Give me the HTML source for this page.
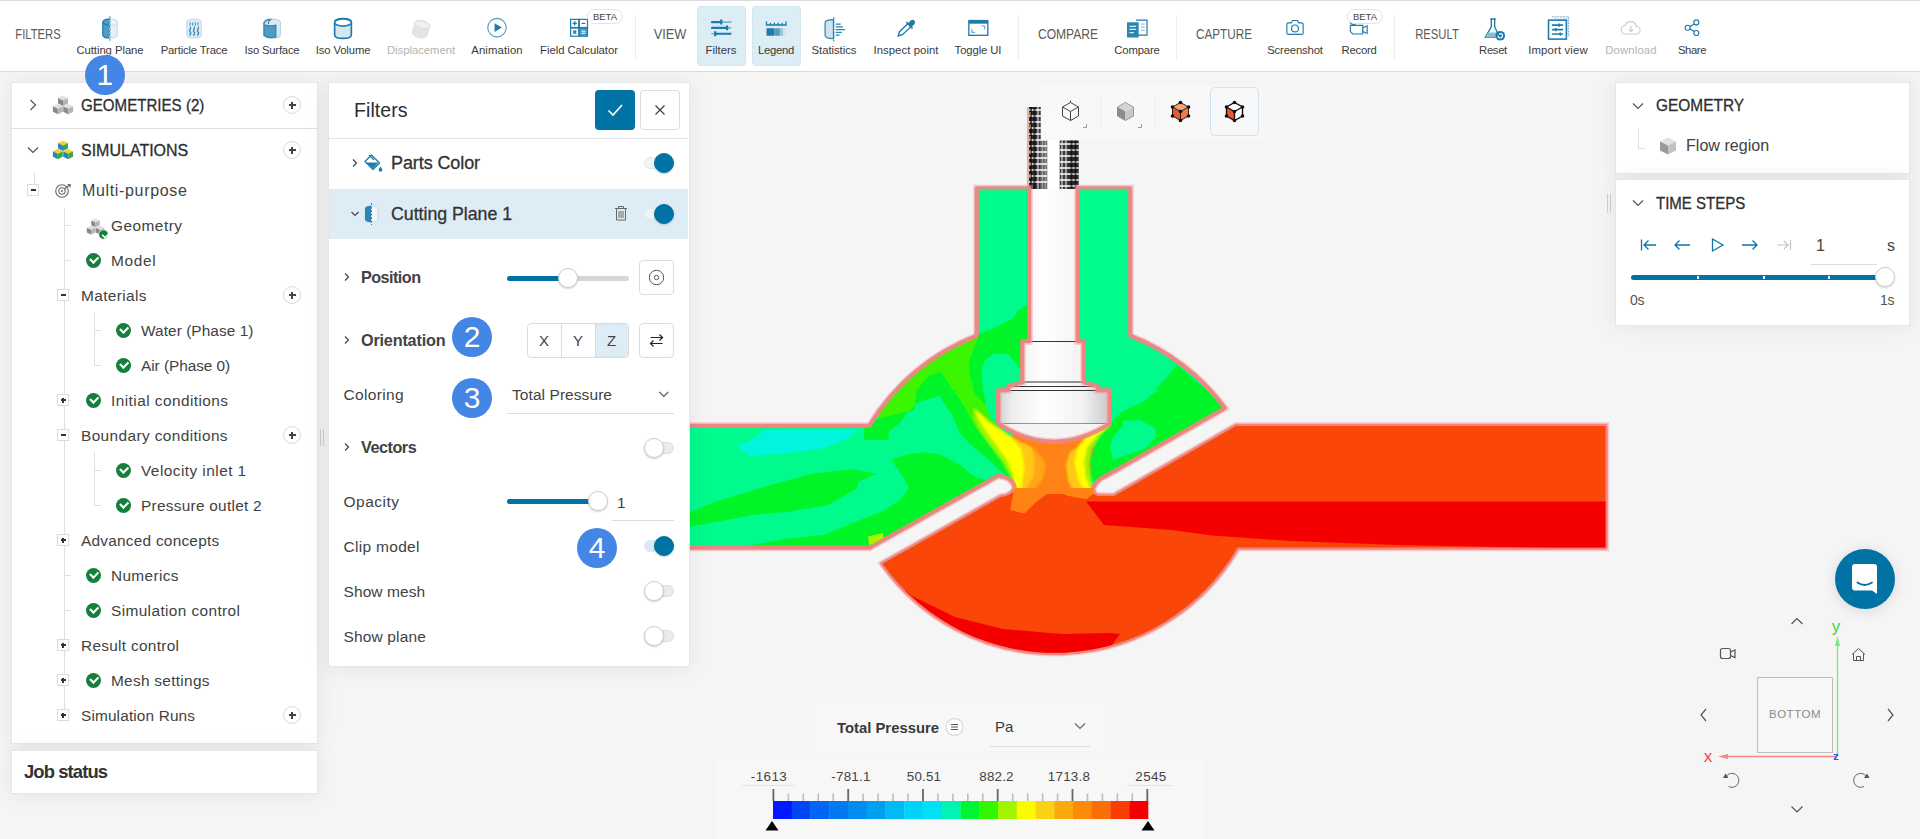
<!DOCTYPE html>
<html lang="en">
<head>
<meta charset="utf-8">
<title>Post-processor</title>
<style>
*{box-sizing:border-box;margin:0;padding:0}
html,body{width:1920px;height:839px;overflow:hidden;background:#f5f5f5;font-family:"Liberation Sans",sans-serif;color:#3a3a3a}
.abs{position:absolute}
#top{z-index:4;position:absolute;left:0;top:0;width:1920px;height:72px;background:#fff;border-top:1px solid #dcdcdc;border-bottom:1px solid #dadada}
.sec{position:absolute;top:25px;line-height:17px;color:#5a5a5a;transform:translateX(-50%);white-space:nowrap;font-weight:400}
.ti{position:absolute;top:42px;font-size:11px;color:#3a3a3a;transform:translateX(-50%);white-space:nowrap;line-height:14px}
.ti.dis{color:#b4b4b4}
.ic{position:absolute;top:12.5px;width:29px;height:29px;transform:translateX(-50%)}
.vsep{position:absolute;top:14px;width:1px;height:44px;background:#ececec}
.hl{position:absolute;top:5px;height:60px;width:49px;background:#dcedf6;border:1px dashed #cfe4ef;border-radius:4px}
.beta{position:absolute;top:8px;height:15px;line-height:14px;font-size:9.5px;color:#444;background:#fff;border:1px solid #e4e4e4;border-radius:8px;padding:0 5px;transform:translateX(-50%)}
.panel{z-index:3;position:absolute;background:#fff;border:1px solid #e6e6e6;box-shadow:0 1px 22px rgba(0,0,0,.075)}
.row{position:absolute;left:0;white-space:nowrap;font-size:16px;color:#424242;transform:translateY(-50%);line-height:20px}
.hd{color:#2e2e2e;-webkit-text-stroke:.3px #2e2e2e}
.plus{position:absolute;width:18px;height:18px;border:1px solid #d9d9d9;border-radius:50%;background:#fff}
.plus:before{content:"";position:absolute;left:4.5px;top:7.3px;width:7px;height:1.4px;background:#444}
.plus:after{content:"";position:absolute;left:7.3px;top:4.5px;width:1.4px;height:7px;background:#444}
.exp{position:absolute;width:12px;height:12px;border:1px solid #dcdcdc;background:#fff}
.exp:before{content:"";position:absolute;left:2.5px;top:4.2px;width:5px;height:1.6px;background:#333}
.exp.p:after{content:"";position:absolute;left:4.2px;top:2.5px;width:1.6px;height:5px;background:#333}
.chk{position:absolute;width:15px;height:15px;border-radius:50%;background:#14803c}
.chk:after{content:"";position:absolute;left:4px;top:3.4px;width:6px;height:3.6px;border-left:2px solid #fff;border-bottom:2px solid #fff;transform:rotate(-45deg)}
.tl{position:absolute;background:#e0e0e0}
.badge{position:absolute;width:40px;height:40px;border-radius:50%;background:#4486e6;color:#fff;font-size:30px;line-height:40px;text-align:center;font-family:"Liberation Sans",sans-serif}
.tog{position:absolute;width:30px;height:12px;border-radius:6px;background:#ececec;border:1px solid #dcdcdc}
.tog i{position:absolute;left:-1px;top:-5px;width:20px;height:20px;border-radius:50%;background:#fff;border:1px solid #cfcfcf;box-shadow:0 1px 2px rgba(0,0,0,.2)}
.tog.on{background:#f1f4f6;border-color:#e3e8eb}
.tog.on i{left:auto;right:-1px;background:#0072a3;border-color:#0072a3}
.btn{position:absolute;border:1px solid #dcdcdc;border-radius:4px;background:#fff}
</style>
</head>
<body>
<div id="top">
<div class="sec" style="left:38.2px;font-size:14px;transform:translateX(-50%) scaleX(0.802)">FILTERS</div>
<svg class="ic" style="left:110px" viewBox="0 0 26 26"><path d="M6.500 7.500c0-1.800 2.800-3 6.500-3s6.500 1.200 6.500 3v11c0 1.800-2.800 3-6.500 3s-6.500-1.200-6.500-3z" fill="#e4eff6" stroke="#c6dcea" stroke-width="1"/><ellipse cx="13" cy="7.500" rx="6.500" ry="2.800" fill="#eef5f9" stroke="#c6dcea" stroke-width=".8"/><path d="M6.500 7.500c0-1.800 2.800-3 6-3v17c-3.200 0-6-1.200-6-3z" fill="#4f9cc3" stroke="#1d7cab" stroke-width="1"/><path d="M7 7.600c.6 1.500 2.800 2.300 5.500 2.400" fill="none" stroke="#1d7cab" stroke-width="1"/><path d="M13 2v22" stroke="#8cc0dc" stroke-width="1.800" stroke-dasharray="2.200 1.200"/></svg>
<div class="ti" style="left:110px;font-size:11.3px;font-weight:normal;letter-spacing:-0.050px">Cutting Plane</div>
<svg class="ic" style="left:194px" viewBox="0 0 26 26"><path d="M6.500 7.500c0-1.800 2.800-3 6.500-3s6.500 1.200 6.500 3v11c0 1.800-2.800 3-6.500 3s-6.500-1.200-6.500-3z" fill="#dfecf4" stroke="#c6dcea" stroke-width="1"/><path d="M9.500 7.500v3M11.800 7.500v3M14.200 7.500v3M16.500 7.500v3" stroke="#4f9cc3" stroke-width="1"/><path d="M9.500 11.500c2 1.500-2 3 0 4.500s-1 2.500 0 3.500M13 11.500c2 1.500-2 3 0 4.500s-1 2.500 0 3.500M16.500 11.500c2 1.500-2 3 0 4.500s-1 2.500 0 3.500" fill="none" stroke="#3a8fbb" stroke-width="1.300"/></svg>
<div class="ti" style="left:194px;font-size:11.3px;font-weight:normal;letter-spacing:-0.168px">Particle Trace</div>
<svg class="ic" style="left:272px" viewBox="0 0 26 26"><path d="M5.500 7.500c0-1.800 3.200-3 7.500-3s7.500 1.200 7.500 3v11c0 1.800-3.200 3-7.500 3s-7.500-1.200-7.500-3z" fill="#dbeaf3" stroke="#b5d3e3" stroke-width="1"/><path d="M5.800 9c2 1.600 7 2.200 10.700 1v10.500c-4 1.300-9 .5-10.700-1.500z" fill="#4f9cc3" stroke="#2b86b3" stroke-width="1"/><path d="M5.800 9.500c-.5-3 3-4.800 6.500-4.600c-2 .6-2.800 2-2.300 4" fill="#cfe3ee" stroke="#2b86b3" stroke-width="1.100"/></svg>
<div class="ti" style="left:272px;font-size:11.3px;font-weight:normal;letter-spacing:-0.210px">Iso Surface</div>
<svg class="ic" style="left:343px" viewBox="0 0 26 26"><path d="M5.500 7.500c0-2 3.300-3.300 7.500-3.300s7.500 1.300 7.500 3.300v11c0 2-3.300 3.300-7.500 3.300s-7.500-1.300-7.500-3.300z" fill="#d4e7f1" stroke="#1d7cab" stroke-width="1.500"/><ellipse cx="13" cy="7.600" rx="7.500" ry="3.200" fill="#fff" stroke="#1d7cab" stroke-width="1.500"/></svg>
<div class="ti" style="left:343px;font-size:11.3px;font-weight:normal;letter-spacing:-0.125px">Iso Volume</div>
<svg class="ic" style="left:421px" viewBox="0 0 26 26"><path d="M7 9c1-3 5-4.500 9-3s6 4 5 6l-2 7c-1 2.500-5 3.500-8.500 2.500S4 17.500 5 15z" fill="#e4e4e4"/><ellipse cx="14" cy="9.500" rx="7" ry="3.300" transform="rotate(14 14 9.500)" fill="#f0f0f0" stroke="#dadada" stroke-width=".8"/></svg>
<div class="ti dis" style="left:421px;font-size:11.3px;font-weight:normal;letter-spacing:-0.036px">Displacement</div>
<svg class="ic" style="left:497px" viewBox="0 0 26 26"><circle cx="13" cy="12.200" r="8.300" fill="#fff" stroke="#4f9cc3" stroke-width="1"/><path d="M10.800 8.200l6.500 4-6.500 4z" fill="#1d7cab"/></svg>
<div class="ti" style="left:497px;font-size:11.3px;font-weight:normal;letter-spacing:0.144px">Animation</div>
<svg class="ic" style="left:579px" viewBox="0 0 26 26"><rect x="5.500" y="4.800" width="7.300" height="7.300" fill="#fff" stroke="#1d7cab" stroke-width="1.100"/><rect x="13.300" y="4.800" width="7.300" height="7.300" fill="#fff" stroke="#1d7cab" stroke-width="1.100"/><rect x="5.500" y="12.600" width="7.300" height="7.300" fill="#fff" stroke="#1d7cab" stroke-width="1.100"/><rect x="13.300" y="12.600" width="7.300" height="7.300" fill="#4f9cc3" stroke="#1d7cab" stroke-width="1.100"/><path d="M7.200 8.450h3.900M9.150 6.500v3.900M15.300 8.450h3.300M7.700 14.800l2.900 2.900M10.600 14.800l-2.900 2.900" stroke="#1d7cab" stroke-width="1.200" fill="none"/><path d="M15.300 15.500h3.300M15.300 17.300h3.300" stroke="#fff" stroke-width="1"/></svg>
<div class="ti" style="left:579px;font-size:11.3px;font-weight:normal;letter-spacing:-0.041px">Field Calculator</div>
<div class="beta" style="left:605px">BETA</div>
<div class="vsep" style="left:635px"></div>
<div class="sec" style="left:670px;font-size:14px;transform:translateX(-50%) scaleX(0.913)">VIEW</div>
<div class="hl" style="left:697px"></div>
<svg class="ic" style="left:721px" viewBox="0 0 26 26"><path d="M4.200 7.200h18M4.200 12.400h18M4.200 17.700h18" stroke="#4f9cc3" stroke-width="1.100"/><path d="M13.200 5v4.400M18.400 10.200v4.400M7.800 15.500v4.400" stroke="#1d7cab" stroke-width="2"/><path d="M4.200 7.200h9M4.200 12.400h14.200M7.800 17.700h14.400" stroke="#1d7cab" stroke-width="2"/></svg>
<div class="ti" style="left:721px;font-size:11.3px;font-weight:normal;letter-spacing:0.026px">Filters</div>
<div class="hl" style="left:752px"></div>
<svg class="ic" style="left:776px" viewBox="0 0 26 26"><path d="M4.500 6.700v3.200h17.500V6.700M8 7.800v2M11.500 7.800v2M15 7.800v2M18.500 7.800v2" fill="none" stroke="#1d7cab" stroke-width="1.200"/><rect x="4.500" y="12.800" width="7" height="6.700" fill="#1d7cab"/><rect x="11.500" y="12.800" width="5" height="6.700" fill="#4f9cc3"/><rect x="16.500" y="12.800" width="3" height="6.700" fill="#9cc5da"/><rect x="19.500" y="12.800" width="2.500" height="6.700" fill="#d3e5ef"/></svg>
<div class="ti" style="left:776px;font-size:11.3px;font-weight:normal;letter-spacing:-0.280px">Legend</div>
<svg class="ic" style="left:834px" viewBox="0 0 26 26"><path d="M5 8c0-1.800 3.500-3 7.500-3v17c-4 0-7.500-1.200-7.500-3z" fill="#cfe3ee" stroke="#2b86b3" stroke-width="1.100"/><path d="M12.800 3v21.500" stroke="#2b86b3" stroke-width="1.100" stroke-dasharray="2 1.300"/><path d="M14.500 9h4.500M14.500 11.500h6.500M14.500 14h8.500M14.500 16.500h5.500M14.500 19h3.500" stroke="#2b86b3" stroke-width="1.100"/></svg>
<div class="ti" style="left:834px;font-size:11.3px;font-weight:normal;letter-spacing:-0.028px">Statistics</div>
<svg class="ic" style="left:906px" viewBox="0 0 26 26"><path d="M14.800 8.500l2.800 2.800-7.800 7.200-3.800 1.200 1.200-3.800z" fill="#fff" stroke="#1d7cab" stroke-width="1.200"/><path d="M13.300 7.200l5.600 5.600M15.500 9l2.300-2.600c1.300-1.400 3.500.8 2.200 2.200L17.500 11z" fill="#1d7cab" stroke="#1d7cab" stroke-width="1.600" stroke-linejoin="round"/></svg>
<div class="ti" style="left:906px;font-size:11.3px;font-weight:normal;letter-spacing:0.084px">Inspect point</div>
<svg class="ic" style="left:978px" viewBox="0 0 26 26"><rect x="4.800" y="5.900" width="17" height="13.200" fill="#fff" stroke="#1d7cab" stroke-width="1.200"/><rect x="4.800" y="5.900" width="17" height="2.800" fill="#1d7cab"/><path d="M7.500 13.500v3h3M16 10.800h3v3" fill="none" stroke="#6aa9c9" stroke-width="1"/></svg>
<div class="ti" style="left:978px;font-size:11.3px;font-weight:normal;letter-spacing:-0.108px">Toggle UI</div>
<div class="vsep" style="left:1018px"></div>
<div class="sec" style="left:1067.8px;font-size:14px;transform:translateX(-50%) scaleX(0.862)">COMPARE</div>
<svg class="ic" style="left:1137px" viewBox="0 0 26 26"><path d="M12 5.500h10v13.500H14" fill="#fff" stroke="#1d7cab" stroke-width="1.100"/><path d="M4 7.500h10.500v13.500H4z" fill="#2b86b3"/><path d="M6.200 11h6M6.200 13.800h6M6.200 16.600h4" stroke="#dcebf3" stroke-width="1.100"/><path d="M16.500 9h3.500M16.500 11.800h3.500M16.500 14.600h3.500" stroke="#9cc5da" stroke-width="1.100"/></svg>
<div class="ti" style="left:1137px;font-size:11.3px;font-weight:normal;letter-spacing:-0.170px">Compare</div>
<div class="vsep" style="left:1176px"></div>
<div class="sec" style="left:1223.9px;font-size:14px;transform:translateX(-50%) scaleX(0.837)">CAPTURE</div>
<svg class="ic" style="left:1295px" viewBox="0 0 26 26"><g transform="translate(13 12.300) scale(.86) translate(-13 -13)"><path d="M4.500 9.500a1.500 1.500 0 0 1 1.500-1.500h3l1.500-2.500h5L17 8h3a1.500 1.500 0 0 1 1.500 1.500v9a1.500 1.500 0 0 1-1.500 1.500H6a1.500 1.500 0 0 1-1.500-1.500z" fill="#fff" stroke="#1d7cab" stroke-width="1.200"/><circle cx="13" cy="13.800" r="3.600" fill="none" stroke="#1d7cab" stroke-width="1.200"/></g></svg>
<div class="ti" style="left:1295px;font-size:11.3px;font-weight:normal;letter-spacing:-0.156px">Screenshot</div>
<svg class="ic" style="left:1359px" viewBox="0 0 26 26"><g transform="translate(13 12.300) scale(.86) translate(-13 -13)"><path d="M4 10.500h13v9H6.500L4 17z" fill="#fff" stroke="#1d7cab" stroke-width="1.200"/><path d="M17 13l4.500-2v8L17 17z" fill="#fff" stroke="#1d7cab" stroke-width="1.200"/><path d="M3.500 7.500c1.500 2 4 2.500 6 2.500" fill="none" stroke="#1d7cab" stroke-width="1.200"/></g></svg>
<div class="ti" style="left:1359px;font-size:11.3px;font-weight:normal;letter-spacing:-0.259px">Record</div>
<div class="beta" style="left:1365px">BETA</div>
<div class="vsep" style="left:1394px"></div>
<div class="sec" style="left:1436.5px;font-size:14px;transform:translateX(-50%) scaleX(0.806)">RESULT</div>
<svg class="ic" style="left:1493px" viewBox="0 0 26 26"><path d="M10.500 4.500h5M11.500 4.500v7L6 21h13l-4.500-9.500v-7" fill="#fff" stroke="#1d7cab" stroke-width="1.200" stroke-linejoin="round"/><path d="M8.500 16.500h9L20 21H6z" fill="#8dbdd5"/><circle cx="19.500" cy="19.500" r="4.300" fill="#1d7cab"/><path d="M17.500 19.500a2 2 0 1 0 2-2l-1 1" fill="none" stroke="#fff" stroke-width="1"/></svg>
<div class="ti" style="left:1493px;font-size:11.3px;font-weight:normal;letter-spacing:-0.350px">Reset</div>
<svg class="ic" style="left:1558px" viewBox="0 0 26 26"><path d="M7.500 2.500h15v18" fill="#e3eff6" stroke="#7fb4cf" stroke-width="1" stroke-dasharray="1.500 1"/><rect x="4.500" y="5.500" width="16" height="17" fill="#fff" stroke="#1d7cab" stroke-width="1.400"/><path d="M7.500 10h10M7.500 14h10M7.500 18h10M14 8.500v3M11 12.500v3M15 16.500v3" stroke="#1d7cab" stroke-width="1.400"/></svg>
<div class="ti" style="left:1558px;font-size:11.3px;font-weight:normal;letter-spacing:0.175px">Import view</div>
<svg class="ic" style="left:1631px" viewBox="0 0 26 26"><g transform="translate(13 12.300) scale(.86) translate(-13 -13)"><path d="M7.500 19.500a4.500 4.500 0 0 1-.5-9 6 6 0 0 1 11.500 1 4 4 0 0 1 0 8z" fill="#fff" stroke="#cdcdcd" stroke-width="1.200"/><path d="M13 11v6M10.800 14.800L13 17l2.200-2.200" fill="none" stroke="#cdcdcd" stroke-width="1.200"/></g></svg>
<div class="ti dis" style="left:1631px;font-size:11.3px;font-weight:normal;letter-spacing:0.149px">Download</div>
<svg class="ic" style="left:1692px" viewBox="0 0 26 26"><g transform="translate(13 12.300) scale(.86) translate(-13 -13)"><path d="M9 13l8-5M9 13l8 5" stroke="#1d7cab" stroke-width="1.200"/><circle cx="17.500" cy="7.500" r="2.600" fill="#fff" stroke="#1d7cab" stroke-width="1.200"/><circle cx="8.500" cy="13" r="2.600" fill="#fff" stroke="#1d7cab" stroke-width="1.200"/><circle cx="17.500" cy="18.500" r="2.600" fill="#fff" stroke="#1d7cab" stroke-width="1.200"/></g></svg>
<div class="ti" style="left:1692px;font-size:11.3px;font-weight:normal;letter-spacing:-0.427px">Share</div>
</div>
<div class="badge" style="left:84.800px;top:55.400px;z-index:9">1</div>
<div class="panel" style="left:11px;top:82px;width:307px;height:662px">
<div class="tl" style="left:-1px;top:45px;width:307px;height:1px"></div>
<div class="tl" style="left:22px;top:89px;width:1px;height:12px"></div>
<div class="tl" style="left:52px;top:125px;width:1px;height:507px"></div>
<div class="tl" style="left:82px;top:229px;width:1px;height:54px"></div>
<div class="tl" style="left:82px;top:369px;width:1px;height:54px"></div>
<div class="tl" style="left:52px;top:142px;width:7px;height:1px"></div>
<div class="tl" style="left:52px;top:177px;width:7px;height:1px"></div>
<div class="tl" style="left:52px;top:317px;width:7px;height:1px"></div>
<div class="tl" style="left:52px;top:492px;width:7px;height:1px"></div>
<div class="tl" style="left:52px;top:527px;width:7px;height:1px"></div>
<div class="tl" style="left:52px;top:597px;width:7px;height:1px"></div>
<div class="tl" style="left:82px;top:247px;width:7px;height:1px"></div>
<div class="tl" style="left:82px;top:282px;width:7px;height:1px"></div>
<div class="tl" style="left:82px;top:387px;width:7px;height:1px"></div>
<div class="tl" style="left:82px;top:422px;width:7px;height:1px"></div>
<svg class="abs" style="left:15px;top:15px" width="12" height="14" viewBox="0 0 12 14"><path d="M3.500 2l5 5-5 5" fill="none" stroke="#555" stroke-width="1.200"/></svg>
<svg class="abs" style="left:14px;top:61px" width="14" height="12" viewBox="0 0 14 12"><path d="M2 3.500l5 5 5-5" fill="none" stroke="#555" stroke-width="1.200"/></svg>
<svg class="abs" style="left:40.0px;top:11.0px" width="22" height="22" viewBox="0 0 20 20"><g transform="translate(0 0.5)"><path d="M10 1l4.500 2.200-4.500 2.200-4.500-2.200z" fill="#e0e0e0"/><path d="M5.500 3.200l4.500 2.200v5l-4.500-2.200z" fill="#8a8a8a"/><path d="M14.500 3.200l-4.500 2.200v5l4.500-2.200z" fill="#b4b4b4"/></g><g transform="translate(-4.7 8)"><path d="M10 1l4.500 2.200-4.500 2.200-4.500-2.200z" fill="#e0e0e0"/><path d="M5.500 3.200l4.500 2.200v5l-4.500-2.200z" fill="#8a8a8a"/><path d="M14.500 3.200l-4.500 2.200v5l4.500-2.200z" fill="#b4b4b4"/></g><g transform="translate(4.7 8)"><path d="M10 1l4.500 2.200-4.500 2.200-4.500-2.200z" fill="#e0e0e0"/><path d="M5.500 3.200l4.500 2.200v5l-4.500-2.200z" fill="#8a8a8a"/><path d="M14.500 3.200l-4.500 2.200v5l4.500-2.200z" fill="#b4b4b4"/></g></svg>
<svg class="abs" style="left:40.0px;top:56.0px" width="22" height="22" viewBox="0 0 20 20"><g transform="translate(0 0.5)"><path d="M10 1l4.500 2.200-4.500 2.200-4.500-2.200z" fill="#f3d12b"/><path d="M5.500 3.200l4.500 2.200v5l-4.500-2.200z" fill="#2b86b3"/><path d="M14.500 3.200l-4.500 2.200v5l4.500-2.200z" fill="#3fa356"/></g><g transform="translate(-4.7 8)"><path d="M10 1l4.500 2.200-4.500 2.200-4.500-2.200z" fill="#f3d12b"/><path d="M5.500 3.200l4.500 2.200v5l-4.500-2.200z" fill="#2b86b3"/><path d="M14.500 3.200l-4.500 2.200v5l4.500-2.200z" fill="#3fa356"/></g><g transform="translate(4.7 8)"><path d="M10 1l4.500 2.200-4.500 2.200-4.500-2.200z" fill="#f3d12b"/><path d="M5.500 3.200l4.500 2.200v5l-4.500-2.200z" fill="#2b86b3"/><path d="M14.500 3.200l-4.500 2.200v5l4.500-2.200z" fill="#3fa356"/></g></svg>
<div class="row hd" style="left:69px;top:22.8px;font-size:16px;font-weight:normal;transform:translateY(-50%) scaleX(0.9438);transform-origin:0 50%">GEOMETRIES (2)</div>
<div class="plus" style="left:271px;top:13px"></div>
<div class="row hd" style="left:69px;top:67.8px;font-size:16px;font-weight:normal;transform:translateY(-50%) scaleX(1.0001);transform-origin:0 50%">SIMULATIONS</div>
<div class="plus" style="left:271px;top:58px"></div>
<div class="exp" style="left:15px;top:101px"></div>
<svg class="abs" style="left:41px;top:98px" width="20" height="18" viewBox="0 0 20 18"><circle cx="9" cy="10" r="6.300" fill="none" stroke="#666" stroke-width="1.100"/><circle cx="9" cy="10" r="3.200" fill="none" stroke="#666" stroke-width="1.100"/><circle cx="9" cy="10" r="1" fill="#666"/><path d="M11 8l6-4M14.500 3.500l3 .2-.6 2.800" fill="none" stroke="#666" stroke-width="1.100"/></svg>
<div class="row" style="left:70px;top:107.7px;font-size:16px;font-weight:normal;letter-spacing:0.658px">Multi-purpose</div>
<svg class="abs" style="left:73.5px;top:133.5px" width="19" height="19" viewBox="0 0 20 20"><g transform="translate(0 0.5)"><path d="M10 1l4.500 2.200-4.500 2.200-4.500-2.200z" fill="#e0e0e0"/><path d="M5.500 3.200l4.500 2.200v5l-4.500-2.200z" fill="#8a8a8a"/><path d="M14.500 3.200l-4.500 2.200v5l4.500-2.200z" fill="#b4b4b4"/></g><g transform="translate(-4.7 8)"><path d="M10 1l4.500 2.200-4.500 2.200-4.500-2.200z" fill="#e0e0e0"/><path d="M5.500 3.200l4.500 2.200v5l-4.500-2.200z" fill="#8a8a8a"/><path d="M14.500 3.200l-4.500 2.200v5l4.500-2.200z" fill="#b4b4b4"/></g><g transform="translate(4.7 8)"><path d="M10 1l4.500 2.200-4.500 2.200-4.500-2.200z" fill="#e0e0e0"/><path d="M5.500 3.200l4.500 2.200v5l-4.500-2.200z" fill="#8a8a8a"/><path d="M14.500 3.200l-4.500 2.200v5l4.500-2.200z" fill="#b4b4b4"/></g></svg>
<div class="chk" style="left:85px;top:145px;width:13px;height:13px;border:1px solid #fff;transform:scale(.8)"></div>
<div class="row" style="left:99px;top:142.7px;font-size:15.4px;font-weight:normal;letter-spacing:0.485px">Geometry</div>
<div class="chk" style="left:73.5px;top:169.5px"></div>
<div class="row" style="left:99px;top:177.7px;font-size:15.4px;font-weight:normal;letter-spacing:0.716px">Model</div>
<div class="exp" style="left:45px;top:206px"></div>
<div class="row" style="left:69px;top:212.7px;font-size:15.4px;font-weight:normal;letter-spacing:0.377px">Materials</div>
<div class="plus" style="left:271px;top:203px"></div>
<div class="chk" style="left:103.5px;top:239.5px"></div>
<div class="row" style="left:129px;top:247.7px;font-size:15.4px;font-weight:normal;letter-spacing:0.070px">Water (Phase 1)</div>
<div class="chk" style="left:103.5px;top:274.5px"></div>
<div class="row" style="left:129px;top:282.7px;font-size:15.4px;font-weight:normal;letter-spacing:-0.048px">Air (Phase 0)</div>
<div class="exp p" style="left:45px;top:311px"></div>
<div class="chk" style="left:73.5px;top:309.5px"></div>
<div class="row" style="left:99px;top:317.7px;font-size:15.4px;font-weight:normal;letter-spacing:0.444px">Initial conditions</div>
<div class="exp" style="left:45px;top:346px"></div>
<div class="row" style="left:69px;top:352.7px;font-size:15.4px;font-weight:normal;letter-spacing:0.393px">Boundary conditions</div>
<div class="plus" style="left:271px;top:343px"></div>
<div class="chk" style="left:103.5px;top:379.5px"></div>
<div class="row" style="left:129px;top:387.7px;font-size:15.4px;font-weight:normal;letter-spacing:0.451px">Velocity inlet 1</div>
<div class="chk" style="left:103.5px;top:414.5px"></div>
<div class="row" style="left:129px;top:422.7px;font-size:15.4px;font-weight:normal;letter-spacing:0.267px">Pressure outlet 2</div>
<div class="exp p" style="left:45px;top:451px"></div>
<div class="row" style="left:69px;top:457.7px;font-size:15.4px;font-weight:normal;letter-spacing:0.241px">Advanced concepts</div>
<div class="chk" style="left:73.5px;top:484.5px"></div>
<div class="row" style="left:99px;top:492.7px;font-size:15.4px;font-weight:normal;letter-spacing:0.347px">Numerics</div>
<div class="chk" style="left:73.5px;top:519.5px"></div>
<div class="row" style="left:99px;top:527.7px;font-size:15.4px;font-weight:normal;letter-spacing:0.389px">Simulation control</div>
<div class="exp p" style="left:45px;top:556px"></div>
<div class="row" style="left:69px;top:562.7px;font-size:15.4px;font-weight:normal;letter-spacing:0.295px">Result control</div>
<div class="exp p" style="left:45px;top:591px"></div>
<div class="chk" style="left:73.5px;top:589.5px"></div>
<div class="row" style="left:99px;top:597.7px;font-size:15.4px;font-weight:normal;letter-spacing:0.292px">Mesh settings</div>
<div class="exp p" style="left:45px;top:626px"></div>
<div class="row" style="left:69px;top:632.7px;font-size:15.4px;font-weight:normal;letter-spacing:0.139px">Simulation Runs</div>
<div class="plus" style="left:271px;top:623px"></div>
</div>
<div class="panel" style="left:11px;top:750px;width:307px;height:44px"><div class="row" style="left:12px;top:21px;color:#333;font-size:18.4px;font-weight:bold;letter-spacing:-0.882px">Job status</div></div>
<div class="abs" style="left:320px;top:429px;width:1px;height:17px;background:#d0d0d0"></div><div class="abs" style="left:323px;top:429px;width:1px;height:17px;background:#d0d0d0"></div>
<svg class="abs" style="left:0;top:0;z-index:1" width="1920" height="839" viewBox="0 0 1920 839">
<defs>
<clipPath id="fl"><path id="flp" d="M977,188.500 H1029 V341 H1022 V382 L1008,386 V390 H998 V424 Q1053,460 1110,424 V390 H1098 V386 L1084,382 V341 H1078 V188.500 H1130 V336 Q1187.600,358.900 1224.500,408 L1106,475.500 Q1095,480 1093,488.500 Q1092.500,496 1100,496 L1114,496 L1236,426 H1605.500 V547.500 H1237.500 A211,211 0 0 1 882.600,563.700 L1001,497 Q1013,496 1015,487.500 Q1013,477 998,475.500 L869.500,547.500 H600 V426 H869.500 Q908.500,362.800 977,336 Z"/></clipPath>
<linearGradient id="cyl" x1="0" x2="1" y1="0" y2="0"><stop offset="0" stop-color="#cfcfcf"/><stop offset=".12" stop-color="#ececec"/><stop offset=".4" stop-color="#ffffff"/><stop offset=".75" stop-color="#f3f3f3"/><stop offset="1" stop-color="#c8c8c8"/></linearGradient>
<linearGradient id="jl" x1="0" x2="1" y1="0" y2="0"><stop offset="0" stop-color="#00f528"/><stop offset=".2" stop-color="#78f500"/><stop offset=".42" stop-color="#ffff00"/><stop offset=".7" stop-color="#ffc820"/><stop offset="1" stop-color="#ff8212"/></linearGradient>
<linearGradient id="jr" x1="1" x2="0" y1="0" y2="0"><stop offset="0" stop-color="#00f528"/><stop offset=".2" stop-color="#78f500"/><stop offset=".42" stop-color="#ffff00"/><stop offset=".7" stop-color="#ffc820"/><stop offset="1" stop-color="#ff8212"/></linearGradient>
<filter id="b1"><feGaussianBlur stdDeviation="0.7"/></filter><filter id="b2" x="-10%" y="-10%" width="120%" height="120%"><feGaussianBlur stdDeviation="1.1"/></filter>
</defs>
<!-- stem behind -->
<g id="stem">
<rect x="1028.700" y="107" width="50" height="82" fill="#ffffff"/>
<rect x="1028.700" y="107" width="12" height="82" fill="#303030"/><rect x="1040.700" y="140.500" width="6.500" height="48.500" fill="#303030"/>
<rect x="1059.700" y="140.500" width="19" height="48.500" fill="#303030"/>
<path d="M1028.700,110h18.500M1028.700,116h18.500M1028.700,122h18.500M1028.700,128h18.500M1028.700,134h18.500M1028.700,140h18.500M1028.700,146h18.500M1028.700,152h18.500M1028.700,158h18.500M1028.700,164h18.500M1028.700,170h18.500M1028.700,176h18.500M1028.700,182h18.500M1059.700,144h19M1059.700,150h19M1059.700,156h19M1059.700,162h19M1059.700,168h19M1059.700,174h19M1059.700,180h19M1059.700,186h19" stroke="#dcdcdc" stroke-width="2.200" opacity=".9"/>
<path d="M1038,107v82M1042.500,140.500v48.500M1045.500,140.500v48.500M1062,140.500v48.500M1066,140.500v48.500" stroke="#fff" stroke-width="2.200" opacity=".5"/>
<path d="M1031,107v82M1034.500,107v82M1071.500,140.500v48.500M1075.500,140.500v48.500" stroke="#000" stroke-width="2" opacity=".6"/>
<path d="M1030,112v4M1030,124v4M1030,136v4M1030,150v4M1030,162v4M1030,174v4" stroke="#d89a4a" stroke-width="1.200"/>
<path d="M1027.700,107v82" stroke="#f5a9a0" stroke-width="1.600"/>
<path d="M1029,189 V341 H1022 V382 L1008,386 V390 H998 V424 Q1053,460 1110,424 V390 H1098 V386 L1084,382 V341 H1078 V189Z" fill="url(#cyl)"/>
<path d="M1022,341.500H1084M1022,382H1084M1008,386.500H1098M998,390.500H1110M998,424H1110" stroke="#333" stroke-width="1"/>
<path d="M998,424 Q1053,460 1110,424Z" fill="#f4f4f4"/>
</g>
<use href="#flp" fill="none" stroke="#f4a0a0" stroke-width="7.500" opacity=".5" filter="url(#b1)"/>
<use href="#flp" fill="none" stroke="#f28484" stroke-width="4.600" stroke-linejoin="round"/>
<!-- fluid -->
<g clip-path="url(#fl)">
<rect x="590" y="180" width="1030" height="480" fill="#00fa8c"/>
<g id="limes" fill="#3cf500">
<path d="M979,335 L960,343 L931,358 L896,388 L874,412 L880,419 L914,410 L917,390 L929,376 L940,371.500 L946,379 L952,390 L963,404 L974,426 L989,444 L1003,461.500 L1014.500,481.600 L1018,490 L1034,470 L1002,430 L998,426 L990,418 L986,405 L984.500,395 L974.400,393 L970,376 L968.700,361.500 L978,340Z"/>
<path d="M833,550 L852,537 L868,532 L886,527 L880,545 L870,551Z"/>
</g>
<g id="greens" fill="#00f528">
<path d="M1029,303 L1017.400,311.500 L1013,318.600 L993,328.600 L977,334.300 L977.300,340 L968.700,361.500 L970,375.800 L974.400,393 L984.500,404.400 L986,405 L984,395 L982,380 L981.600,370 L985,360 L993,354 L1008,354 L1015,362 L1021.700,372 L1022,341 L1029,340Z"/>
<path d="M914.400,410 L917,390 L928.700,375.800 L940,371.500 L945.800,378.700 L951.600,390 L957.300,390 L934.400,397.200 L917.200,402.900 L907.200,412.900 L900,422.900 L888.600,431.500 L888.600,440 L864.300,440 L864,424 L880,418Z"/>
<path d="M940,397.200 L951.600,414.300 L960,432.900 L968.700,442.900 L985.900,457.200 L1003,473 L1008.800,477.300 L1014.500,481.600 L1003,461.500 L988.800,444.400 L974.400,425.800 L963,404.300 L953,390 L945,392Z"/>
<path d="M890.800,459.400 L907.200,454.400 L924.400,452.200 L940,454.400 L960,464.400 L973,475.800 L985,480 L1000,474 L1002,480 L870,553 L750,553 L751.700,545 L788.400,538.400 L823.400,535 L851.800,523.400 L885,510 L901.500,498.700 L908.600,487.300 L898.600,470Z"/>
<path d="M680,517 L715,501.700 L765,486.700 L811.800,473.400 L851.800,469.200 L876.800,473.400 L858.500,481.700 L856.800,488.400 L828.400,505 L788.400,511.700 L751.700,515 L718.400,521.700 L680,528Z"/>
<path d="M1177,365 L1226,407 L1108,477 L1095,488 L1088,470 L1092,450 L1102,434 L1110,424 L1122,412 L1146,400 L1165,379Z"/>
</g>
<path d="M868,536.500 L883,533 L884,541 L869,545Z" fill="#aaf500"/>
<g id="springs" fill="#00fa8c">
<path d="M1123,420.800 L1140,420 L1155.800,428.600 L1155.800,437.200 L1147,447 L1137,451.500 L1113,460 L1110,447 L1113,437 L1123,425.800Z"/>
<path d="M1111.500,390 L1158.700,390 L1137,404 L1118.600,408.600 L1111.500,418.600Z"/>
</g>
<path d="M736.700,445.900 L751.700,440 L765,430 L860,429.200 L845,440 L823.400,448.400 L785,453.400 L750,455.900Z" fill="#00f5dc"/>
<!-- throat -->
<g filter="url(#b2)"><path d="M1011,437 L1025,424 L1085,424 L1098,434 L1090,460 L1092,500 L1016,500 L1024,470Z" fill="#ff8212"/>
<path d="M1031.700,447.200 L1038.800,453 L1046,464.400 L1043,478.700 L1031.700,493 L1017.400,501.600 L1017.400,498.700 L1026,490 L1033.800,475.800 L1034.500,457.200Z" fill="#ffa514"/>
<path d="M1011.600,437.200 L1031.700,447.200 L1034.500,457.200 L1033.800,475.800 L1026,490 L1017.400,498.700 L1016.700,495.900 L1021.700,487.300 L1024.500,467.300 L1021.700,450Z" fill="#ffc814"/>
<path d="M973,407 L980,412 L990,421 L998,427.200 L1011.600,437.200 L1021.700,450 L1024.500,467.300 L1021.700,487.300 L1016.700,495.900 L1013,489 L1011,478 L1003,463 L992,448 L981,433 L974,419Z" fill="#9bf500"/>
<path d="M975.900,410 L988.800,422.900 L997.300,427.200 L1011.600,437.200 L1021.700,450 L1024.500,467.300 L1021.700,487.300 L1016.700,495.900 L1015.200,488.700 L1013.600,475.800 L1007.900,461.500 L997.900,447.200 L986.500,431.500 L978.300,418.600Z" fill="#ffff00"/>
<path d="M1112,424 L1100,436 L1091,450 L1089,465 L1091,478 L1094,488 L1091.500,493 L1085.700,475.800 L1084.300,461.500 L1087.200,447.200 L1098.600,434.300 L1108,426Z" fill="#9bf500"/>
<path d="M1110,425.800 L1098.600,434.300 L1087.200,447.200 L1084.300,461.500 L1085.700,475.800 L1091.500,493 L1088,497 L1078,480 L1074,462 L1078,447 L1090,432 L1105,425Z" fill="#ffff00"/>
<path d="M1078,447 L1070,452 L1066,465 L1068,480 L1076,497 L1088,497 L1078,480 L1074,462Z" fill="#ffc814"/>
</g>
<use href="#flp" fill="none" stroke="#f28484" stroke-width="3.600" stroke-linejoin="round"/>
<!-- red zones -->
<path d="M860,575 L1008,491 L1016,494 L1093,494 L1114,496 L1236,425 H1620 V700 H860 Z" fill="#fa4608"/>
<path d="M1014,490 L1010,510 L1024.500,513.600 L1036.400,501.700 L1053,489.800 L1067.400,495.800 L1086.500,499.300 L1093,494 L1093,488 L1015,488Z" fill="#ff8212"/>
<path d="M1086,501.500 H1607 V549 L1397,545 L1290,541 L1212,535.500 L1172,530 L1104,525Z" fill="#f50000"/>
<path d="M905,590 L912,596 L955,617 L1003,629 L1062,634 L1110,633 L1120,634 L1112,645 L1110,660 L1000,665 L890,620Z" fill="#f50000"/>
</g>
<!-- view-mode toolbar -->
<rect x="1041" y="86" width="222" height="54" fill="#f8f8f8" opacity=".88"/>
</svg>
<div class="panel" style="left:328px;top:82px;width:362px;height:585px;z-index:3">
<div class="row" style="left:25px;top:27px;color:#2e2e2e;font-size:19.5px;font-weight:normal;letter-spacing:0.090px">Filters</div>
<div class="abs" style="left:266px;top:7px;width:40px;height:40px;border-radius:4px;background:#0072a3"><svg width="40" height="40" viewBox="0 0 40 40"><path d="M13.500 20.500l4.500 4.500 9-10" fill="none" stroke="#fff" stroke-width="1.700"/></svg></div>
<div class="btn" style="left:311px;top:7px;width:40px;height:40px"><svg width="38" height="38" viewBox="0 0 38 38"><path d="M14.500 14.500l9 9M23.500 14.500l-9 9" fill="none" stroke="#444" stroke-width="1.300"/></svg></div>
<div class="tl" style="left:0;top:55px;width:359px;height:1px;background:#e4e4e4"></div>
<svg class="abs" style="left:20.5px;top:74px" width="10" height="12" viewBox="0 0 10 12"><path d="M3 2.500l3.500 3.500-3.500 3.500" fill="none" stroke="#444" stroke-width="1.200"/></svg>
<svg class="abs" style="left:33px;top:69px" width="22" height="22" viewBox="0 0 22 22"><path d="M9.500 3l8 8-6.500 6.500-8-8z" fill="#fff" stroke="#1d7cab" stroke-width="1.300" stroke-linejoin="round"/><path d="M4 10.500h12.500l-5.500 6z" fill="#1d7cab"/><path d="M18.500 14.500c1.300 1.800 1.800 2.600 1.800 3.400a1.800 1.800 0 0 1-3.600 0c0-.8.500-1.600 1.800-3.400z" fill="#1d7cab"/><path d="M7 3l5 5" stroke="#1d7cab" stroke-width="1.300"/></svg>
<div class="row" style="left:62px;top:79.8px;color:#333;-webkit-text-stroke:.3px #333;font-size:18px;font-weight:normal;letter-spacing:-0.095px">Parts Color</div>
<div class="tog on" style="left:315px;top:74px;"><i></i></div>
<div class="abs" style="left:0;top:106px;width:359px;height:50px;background:#deedf5"></div>
<svg class="abs" style="left:19.5px;top:126px" width="12" height="10" viewBox="0 0 12 10"><path d="M2.500 3l3.500 3.500 3.500-3.500" fill="none" stroke="#444" stroke-width="1.2"/></svg>
<svg class="abs" style="left:32px;top:119px" width="22" height="24" viewBox="0 0 22 24"><path d="M4 6.500c0-1.600 2.700-2.700 6.500-2.700s6.500 1.100 6.500 2.700v11c0 1.600-2.700 2.700-6.500 2.700S4 19.100 4 17.500z" fill="#f0f6fa" stroke="#c5dbe7" stroke-width="1"/><path d="M4 6.500c0-1.600 2.700-2.700 6-2.700v16.400c-3.300 0-6-1.100-6-2.700z" fill="#2b86b3"/><path d="M10.500 1v22" stroke="#2b86b3" stroke-width="1" stroke-dasharray="2 1.500"/></svg>
<div class="row" style="left:62px;top:131px;color:#333;-webkit-text-stroke:.3px #333;font-size:17.8px;font-weight:normal;letter-spacing:-0.037px">Cutting Plane 1</div>
<svg class="abs" style="left:284px;top:121px" width="16" height="18" viewBox="0 0 16 18"><path d="M2 4.500h12M5.500 4.500v-2h5v2M3.500 4.500v11.500h9V4.500M6 7v7M8 7v7M10 7v7" fill="none" stroke="#666" stroke-width="1"/></svg>
<div class="tog on" style="left:315px;top:125px;"><i></i></div>
<svg class="abs" style="left:13px;top:188px" width="10" height="12" viewBox="0 0 10 12"><path d="M3 2.500l3.500 3.500-3.500 3.500" fill="none" stroke="#444" stroke-width="1.200"/></svg>
<div class="row" style="left:32px;top:194px;font-size:16.2px;font-weight:bold;letter-spacing:-0.546px">Position</div>
<div class="abs" style="left:178px;top:193px;width:122px;height:5px;border-radius:3px;background:#d6d6d6"></div>
<div class="abs" style="left:178px;top:193px;width:61px;height:5px;border-radius:3px;background:#0072a3"></div>
<div class="abs" style="left:229px;top:185px;width:20px;height:20px;border-radius:50%;background:#fff;border:1px solid #cfcfcf;box-shadow:0 1px 2px rgba(0,0,0,.2)"></div>
<div class="btn" style="left:310px;top:177px;width:35px;height:35px"><svg width="33" height="33" viewBox="0 0 33 33"><circle cx="16.500" cy="16.500" r="7.200" fill="none" stroke="#555" stroke-width="1"/><circle cx="16.500" cy="16.500" r="2.200" fill="none" stroke="#555" stroke-width="1"/></svg></div>
<svg class="abs" style="left:13px;top:251px" width="10" height="12" viewBox="0 0 10 12"><path d="M3 2.500l3.500 3.500-3.500 3.500" fill="none" stroke="#444" stroke-width="1.200"/></svg>
<div class="row" style="left:32px;top:257px;font-size:16.2px;font-weight:bold;letter-spacing:-0.176px">Orientation</div>
<div class="btn" style="left:198px;top:240px;width:102px;height:35px;overflow:hidden"><div class="abs" style="left:67px;top:0;width:34px;height:33px;background:#deedf5;border:1px dashed #cfe3ee"></div><div class="abs" style="left:33px;top:0;width:1px;height:33px;background:#dcdcdc"></div><div class="abs" style="left:67px;top:0;width:1px;height:33px;background:#dcdcdc"></div><div class="row" style="left:11px;top:17px;font-size:15px;font-weight:normal;letter-spacing:0.127px">X</div><div class="row" style="left:45px;top:17px;font-size:15px;font-weight:normal;letter-spacing:-0.251px">Y</div><div class="row" style="left:79px;top:17px;font-size:15px;font-weight:normal;letter-spacing:0.247px">Z</div></div>
<div class="btn" style="left:310px;top:240px;width:35px;height:35px"><svg width="33" height="33" viewBox="0 0 33 33"><path d="M10.500 13.500h12M19.500 10.500l3 3-3 3M22.500 19.500h-12M13.500 16.500l-3 3 3 3" fill="none" stroke="#222" stroke-width="1.200"/></svg></div>
<div class="row" style="left:14.5px;top:311.6px;font-size:15.5px;font-weight:normal;letter-spacing:0.351px">Coloring</div>
<div class="row" style="left:183px;top:311.6px;font-size:15.5px;font-weight:normal;letter-spacing:0.070px">Total Pressure</div>
<svg class="abs" style="left:327.2px;top:304.5px" width="15.600000000000001" height="13.0" viewBox="0 0 12 10"><path d="M2.500 3l3.500 3.500 3.500-3.500" fill="none" stroke="#555" stroke-width="0.923076923076923"/></svg>
<div class="tl" style="left:178px;top:330px;width:167px;height:1px;background:#dcdcdc"></div>
<svg class="abs" style="left:13px;top:358px" width="10" height="12" viewBox="0 0 10 12"><path d="M3 2.500l3.500 3.500-3.500 3.500" fill="none" stroke="#444" stroke-width="1.200"/></svg>
<div class="row" style="left:32px;top:364px;font-size:16.2px;font-weight:bold;letter-spacing:-0.466px">Vectors</div>
<div class="tog" style="left:315px;top:359px;"><i></i></div>
<div class="row" style="left:14.5px;top:418.6px;font-size:15.5px;font-weight:normal;letter-spacing:0.510px">Opacity</div>
<div class="abs" style="left:178px;top:416px;width:92px;height:5px;border-radius:3px;background:#d6d6d6"></div>
<div class="abs" style="left:178px;top:416px;width:91px;height:5px;border-radius:3px;background:#0072a3"></div>
<div class="abs" style="left:259px;top:408px;width:20px;height:20px;border-radius:50%;background:#fff;border:1px solid #cfcfcf;box-shadow:0 1px 2px rgba(0,0,0,.2)"></div>
<div class="row" style="left:288px;top:419.6px;font-size:15.5px;font-weight:normal;letter-spacing:0.841px">1</div>
<div class="tl" style="left:283px;top:437px;width:62px;height:1px;background:#dcdcdc"></div>
<div class="row" style="left:14.5px;top:463.6px;font-size:15.5px;font-weight:normal;letter-spacing:0.304px">Clip model</div>
<div class="tog on" style="left:315px;top:457px;background:#d9eaf3;border-color:#d9eaf3"><i></i></div>
<div class="row" style="left:14.5px;top:508.6px;font-size:15.5px;font-weight:normal;letter-spacing:0.093px">Show mesh</div>
<div class="tog" style="left:315px;top:502px;"><i></i></div>
<div class="row" style="left:14.5px;top:553.6px;font-size:15.5px;font-weight:normal;letter-spacing:0.142px">Show plane</div>
<div class="tog" style="left:315px;top:547px;"><i></i></div>
</div>
<div class="badge" style="left:452px;top:316.8px;z-index:9">2</div>
<div class="badge" style="left:452px;top:377.8px;z-index:9">3</div>
<div class="badge" style="left:577px;top:527.5px;z-index:9">4</div>
<!-- view mode icons -->
<div class="abs" style="left:1052px;top:110px;width:1px;height:0"></div>
<svg class="abs" style="left:1041px;top:87px;z-index:2" width="222" height="54" viewBox="1041 86 222 54">
<g fill="none" stroke="#444" stroke-width="1">
<path d="M1070.500,101.500l8,4.500v9l-8,4.500l-8-4.500v-9z M1062.500,106l8,4.500l8-4.500M1070.500,110.500v9M1070.500,99.500v2" />
<path d="M1083,126.500h3.500v-3.500M1138,126.500h3.500v-3.500" stroke="#999"/>
</g>
<g><path d="M1125.500,101.500l8,4.500l-8,4.500l-8-4.500z" fill="#d6d6d6"/><path d="M1117.500,106l8,4.500v9l-8-4.500z" fill="#8c8c8c"/><path d="M1133.500,106l-8,4.500v9l8-4.500z" fill="#c8c8c8"/><path d="M1125.500,101.500l8,4.500v9l-8,4.500l-8-4.500v-9z" fill="none" stroke="#777" stroke-width=".7"/></g>
<path d="M1100.500,93v36M1155.500,93v36" stroke="#ededed" stroke-width="1"/>
<g><path d="M1180.500,101.500l8,4.500l-8,4.500l-8-4.500z" fill="#f7a07a"/><path d="M1172.500,106l8,4.500v9l-8-4.500z" fill="#e85a2a"/><path d="M1188.500,106l-8,4.500v9l8-4.500z" fill="#f07a4a"/><path d="M1180.500,101.500l8,4.500v9l-8,4.500l-8-4.500v-9z M1172.500,106l8,4.500l8-4.500M1180.500,110.500v9" fill="none" stroke="#222" stroke-width="1"/><g fill="#111"><circle cx="1180.500" cy="101.500" r="1.800"/><circle cx="1172.500" cy="106" r="1.800"/><circle cx="1188.500" cy="106" r="1.800"/><circle cx="1180.500" cy="110.500" r="1.800"/><circle cx="1172.500" cy="115" r="1.800"/><circle cx="1188.500" cy="115" r="1.800"/><circle cx="1180.500" cy="119.500" r="1.800"/></g></g>
<rect x="1210.500" y="86.500" width="48" height="48" rx="4" fill="#f7f8f9" stroke="#cfe3ee"/>
<g><path d="M1234.500,101.500l8,4.500l-8,4.500l-8-4.500z" fill="#fff"/><path d="M1226.500,106l8,4.500v9l-8-4.500z" fill="#e85a2a"/><path d="M1242.500,106l-8,4.500v9l8-4.500z" fill="#fff"/><path d="M1234.500,101.500l8,4.500v9l-8,4.500l-8-4.500v-9z M1226.500,106l8,4.500l8-4.500M1234.500,110.500v9" fill="none" stroke="#111" stroke-width="1.400"/><g fill="#111"><circle cx="1234.500" cy="101.500" r="1.800"/><circle cx="1226.500" cy="106" r="1.800"/><circle cx="1242.500" cy="106" r="1.800"/><circle cx="1234.500" cy="110.500" r="1.800"/><circle cx="1226.500" cy="115" r="1.800"/><circle cx="1242.500" cy="115" r="1.800"/><circle cx="1234.500" cy="119.500" r="1.800"/></g></g>
</svg>
<!-- geometry panel -->
<div class="panel" style="left:1615px;top:82px;width:295px;height:92px">
<svg class="abs" style="left:15px;top:17px" width="14" height="12" viewBox="0 0 14 12"><path d="M2 3.500l5 5 5-5" fill="none" stroke="#555" stroke-width="1.200"/></svg>
<div class="row hd" style="left:40px;top:22.800px;font-size:16px;font-weight:normal;transform:translateY(-50%) scaleX(0.9647);transform-origin:0 50%">GEOMETRY</div>
<div class="tl" style="left:22px;top:45px;width:1px;height:21px"></div><div class="tl" style="left:22px;top:65px;width:7px;height:1px"></div>
<svg class="abs" style="left:42px;top:53px" width="20" height="20" viewBox="0 0 20 20"><path d="M10 1.500l8 4-8 4-8-4z" fill="#e2e2e2"/><path d="M2 5.500l8 4v9l-8-4z" fill="#9a9a9a"/><path d="M18 5.500l-8 4v9l8-4z" fill="#c2c2c2"/></svg>
<div class="row" style="left:70px;top:62px;font-size:16.1px;font-weight:normal;letter-spacing:0.002px">Flow region</div>
</div>
<!-- time steps -->
<div class="abs" style="left:1607px;top:194px;width:1px;height:19px;background:#d0d0d0;z-index:3"></div><div class="abs" style="left:1610px;top:194px;width:1px;height:19px;background:#d0d0d0;z-index:3"></div>
<div class="panel" style="left:1615px;top:179px;width:295px;height:147px">
<svg class="abs" style="left:15px;top:17px" width="14" height="12" viewBox="0 0 14 12"><path d="M2 3.500l5 5 5-5" fill="none" stroke="#555" stroke-width="1.200"/></svg>
<div class="row hd" style="left:40px;top:23.500px;font-size:16px;font-weight:normal;transform:translateY(-50%) scaleX(0.9385);transform-origin:0 50%">TIME STEPS</div>
<svg class="abs" style="left:20px;top:54px" width="170" height="22" viewBox="0 0 170 22">
<g fill="none" stroke="#0b76a8" stroke-width="1.300"><path d="M5.500,5.500v11M8,11h12M12.500,6.500L8,11l4.500,4.500"/><path d="M39,11h15M43.500,6.500L39,11l4.500,4.500"/><path d="M76.500,5l10.500,6l-10.500,6z"/><path d="M106,11h15M116.500,6.500L121,11l-4.500,4.500"/></g>
<g fill="none" stroke="#c4c4c4" stroke-width="1.200"><path d="M141,11h11M148,7L152,11l-4,4M154.500,6v10"/></g></svg>
<div class="row" style="left:200px;top:66px;font-size:16px;font-weight:normal;letter-spacing:0.449px">1</div>
<div class="row" style="left:271px;top:66px;font-size:16px;font-weight:normal;letter-spacing:-1.007px">s</div>
<div class="tl" style="left:195px;top:84px;width:66px;height:1px;background:#dcdcdc"></div>
<div class="abs" style="left:15px;top:95px;width:255px;height:5px;border-radius:3px;background:#0072a3"></div>
<div class="abs" style="left:81px;top:96px;width:2px;height:3px;background:#fff"></div><div class="abs" style="left:147px;top:96px;width:2px;height:3px;background:#fff"></div><div class="abs" style="left:212px;top:96px;width:2px;height:3px;background:#fff"></div>
<div class="abs" style="left:259px;top:87px;width:20px;height:20px;border-radius:50%;background:#fff;border:1px solid #cfcfcf;box-shadow:0 1px 2px rgba(0,0,0,.2)"></div>
<div class="row" style="left:14px;top:120px;color:#555;font-size:14px;font-weight:normal;letter-spacing:-0.248px">0s</div>
<div class="row" style="left:264px;top:120px;color:#555;font-size:14px;font-weight:normal;letter-spacing:-0.248px">1s</div>
</div>
<!-- chat bubble -->
<div class="abs" style="left:1835px;top:549px;width:60px;height:60px;border-radius:50%;background:#0072a3;z-index:3;box-shadow:0 2px 14px rgba(0,0,0,.12)"><svg width="60" height="60" viewBox="0 0 60 60"><path d="M20,15h19a3,3 0 0 1 3,3v27l-5-3.500H20a3,3 0 0 1-3-3V18a3,3 0 0 1 3-3z" fill="#fff"/><path d="M22.500,33.500q7,5 14.500,0" fill="none" stroke="#0072a3" stroke-width="1.800" stroke-linecap="round"/></svg></div>
<!-- orientation cube -->
<svg class="abs" style="left:1690px;top:605px;z-index:2" width="220" height="225" viewBox="1690 605 220 225">
<rect x="1757.500" y="677.500" width="75" height="75" fill="#f7f7f7" stroke="#bdbdbd"/>
<text x="1795" y="718.300" font-size="11.500" fill="#8a8a8a" text-anchor="middle" font-family="Liberation Sans, sans-serif" letter-spacing=".5">BOTTOM</text>
<path d="M1837.500,756V640" stroke="#7de87d" stroke-width="1.300"/><path d="M1837.500,636l-2.500,10h5z" fill="#7de87d"/>
<path d="M1836,756.500H1722" stroke="#f08a8a" stroke-width="1.300"/><path d="M1718,756.500l10-2.500v5z" fill="#f08a8a"/>
<text x="1836" y="632" font-size="17" fill="#3dd63d" text-anchor="middle" font-family="Liberation Sans, sans-serif">y</text>
<text x="1708" y="762" font-size="17" fill="#ee4848" text-anchor="middle" font-family="Liberation Sans, sans-serif">x</text>
<text x="1836" y="760" font-size="11" fill="#2a50e8" text-anchor="middle" font-weight="bold" font-family="Liberation Sans, sans-serif">z</text>
<g fill="none" stroke="#555" stroke-width="1.200">
<path d="M1791.500,624l5.500-5.500l5.500,5.500"/><path d="M1791.500,806.500l5.500,5.500l5.500-5.500"/>
<path d="M1706,709l-5,6l5,6"/><path d="M1888,709l5,6l-5,6"/>
<rect x="1720.500" y="648.500" width="10" height="10" rx="2"/><path d="M1730.500,652l4.500-2v7.500l-4.500-2"/>
<path d="M1852,654.500l6.500-6l6.500,6M1853.500,653.500v7h10v-7M1856.500,660.500v-4h4v4" stroke-width="1"/>
<path d="M1726,776.500a7,7 0 1 1 2.500,10" stroke="#666" stroke-width="1"/><path d="M1866.500,776.500a7,7 0 1 0-2.500,10" stroke="#666" stroke-width="1"/>
</g>
<path d="M1723,778l2.500-4.500l3,4.500z M1869.500,778l-2.500-4.500l-3,4.500z" fill="#555"/>
</svg>
<svg class="abs" style="left:710px;top:695px;z-index:2" width="500" height="144" viewBox="710 695 500 144" font-family="Liberation Sans, sans-serif">
<rect x="715" y="760" width="490" height="79" rx="4" fill="#f7f7f7"/><rect x="815" y="703" width="289" height="48" rx="4" fill="#f8f8f8"/>
<text x="888" y="732.500" font-size="15" font-weight="bold" fill="#3a3a3a" text-anchor="middle" textLength="102" lengthAdjust="spacingAndGlyphs">Total Pressure</text>
<circle cx="954.500" cy="727" r="8.500" fill="#fff" stroke="#dcdcdc" stroke-width="1.300"/><path d="M951,724.500h7M951,727h7M951,729.500h7" stroke="#555" stroke-width="1"/>
<text x="995" y="732" font-size="15" fill="#3a3a3a">Pa</text>
<path d="M1075,723.500l5,5l5-5" fill="none" stroke="#666" stroke-width="1.200"/>
<path d="M990,746.500h100" stroke="#dedede"/>
<text x="769" y="780.500" fill="#444" text-anchor="middle" style="font-size:13.4px;font-weight:normal;letter-spacing:0.417px">-1613</text>
<text x="851" y="780.500" fill="#444" text-anchor="middle" style="font-size:13.4px;font-weight:normal;letter-spacing:0.258px">-781.1</text>
<text x="924" y="780.500" fill="#444" text-anchor="middle" style="font-size:13.4px;font-weight:normal;letter-spacing:0.199px">50.51</text>
<text x="996.5" y="780.500" fill="#444" text-anchor="middle" style="font-size:13.4px;font-weight:normal;letter-spacing:0.199px">882.2</text>
<text x="1069" y="780.500" fill="#444" text-anchor="middle" style="font-size:13.4px;font-weight:normal;letter-spacing:0.228px">1713.8</text>
<text x="1151" y="780.500" fill="#444" text-anchor="middle" style="font-size:13.4px;font-weight:normal;letter-spacing:0.382px">2545</text>
<path d="M742,785.500h54M1127,785.500h46" stroke="#e6e6e6"/>
<rect x="773.00" y="801" width="19.05" height="18" fill="#0019ff"/>
<rect x="791.75" y="801" width="19.05" height="18" fill="#0046f5"/>
<rect x="810.50" y="801" width="19.05" height="18" fill="#0064f5"/>
<rect x="829.25" y="801" width="19.05" height="18" fill="#0078f0"/>
<rect x="848.00" y="801" width="19.05" height="18" fill="#008cf0"/>
<rect x="866.75" y="801" width="19.05" height="18" fill="#00a0f0"/>
<rect x="885.50" y="801" width="19.05" height="18" fill="#00b9f5"/>
<rect x="904.25" y="801" width="19.05" height="18" fill="#00d2fa"/>
<rect x="923.00" y="801" width="19.05" height="18" fill="#00e1f5"/>
<rect x="941.75" y="801" width="19.05" height="18" fill="#00f5b4"/>
<rect x="960.50" y="801" width="19.05" height="18" fill="#00f532"/>
<rect x="979.25" y="801" width="19.05" height="18" fill="#32f500"/>
<rect x="998.00" y="801" width="19.05" height="18" fill="#a0f500"/>
<rect x="1016.75" y="801" width="19.05" height="18" fill="#fafa00"/>
<rect x="1035.50" y="801" width="19.05" height="18" fill="#fad214"/>
<rect x="1054.25" y="801" width="19.05" height="18" fill="#faaa0a"/>
<rect x="1073.00" y="801" width="19.05" height="18" fill="#fa8c0a"/>
<rect x="1091.75" y="801" width="19.05" height="18" fill="#fa6e0a"/>
<rect x="1110.50" y="801" width="19.05" height="18" fill="#fa3c05"/>
<rect x="1129.25" y="801" width="19.05" height="18" fill="#f50000"/>
<path d="M773.4,789v12" stroke="#666" stroke-width="1.800"/>
<path d="M788.4,793.500v7.500" stroke="#bcbcbc" stroke-width="1.600"/>
<path d="M803.3,793.500v7.500" stroke="#bcbcbc" stroke-width="1.600"/>
<path d="M818.3,793.500v7.500" stroke="#bcbcbc" stroke-width="1.600"/>
<path d="M833.2,793.500v7.500" stroke="#bcbcbc" stroke-width="1.600"/>
<path d="M848.2,789v12" stroke="#666" stroke-width="1.800"/>
<path d="M863.1,793.500v7.500" stroke="#bcbcbc" stroke-width="1.600"/>
<path d="M878.1,793.500v7.500" stroke="#bcbcbc" stroke-width="1.600"/>
<path d="M893.0,793.500v7.500" stroke="#bcbcbc" stroke-width="1.600"/>
<path d="M908.0,793.500v7.500" stroke="#bcbcbc" stroke-width="1.600"/>
<path d="M923.0,789v12" stroke="#666" stroke-width="1.800"/>
<path d="M937.9,793.500v7.500" stroke="#bcbcbc" stroke-width="1.600"/>
<path d="M952.9,793.500v7.500" stroke="#bcbcbc" stroke-width="1.600"/>
<path d="M967.8,793.500v7.500" stroke="#bcbcbc" stroke-width="1.600"/>
<path d="M982.8,793.500v7.500" stroke="#bcbcbc" stroke-width="1.600"/>
<path d="M997.7,789v12" stroke="#666" stroke-width="1.800"/>
<path d="M1012.7,793.500v7.500" stroke="#bcbcbc" stroke-width="1.600"/>
<path d="M1027.7,793.500v7.500" stroke="#bcbcbc" stroke-width="1.600"/>
<path d="M1042.6,793.500v7.500" stroke="#bcbcbc" stroke-width="1.600"/>
<path d="M1057.6,793.500v7.500" stroke="#bcbcbc" stroke-width="1.600"/>
<path d="M1072.5,789v12" stroke="#666" stroke-width="1.800"/>
<path d="M1087.5,793.500v7.500" stroke="#bcbcbc" stroke-width="1.600"/>
<path d="M1102.4,793.500v7.500" stroke="#bcbcbc" stroke-width="1.600"/>
<path d="M1117.4,793.500v7.500" stroke="#bcbcbc" stroke-width="1.600"/>
<path d="M1132.3,793.500v7.500" stroke="#bcbcbc" stroke-width="1.600"/>
<path d="M1147.3,789v12" stroke="#666" stroke-width="1.800"/>
<path d="M772,821l6.500,9.500h-13z M1148,821l6.500,9.500h-13z" fill="#000"/>
</svg>
</body>
</html>
